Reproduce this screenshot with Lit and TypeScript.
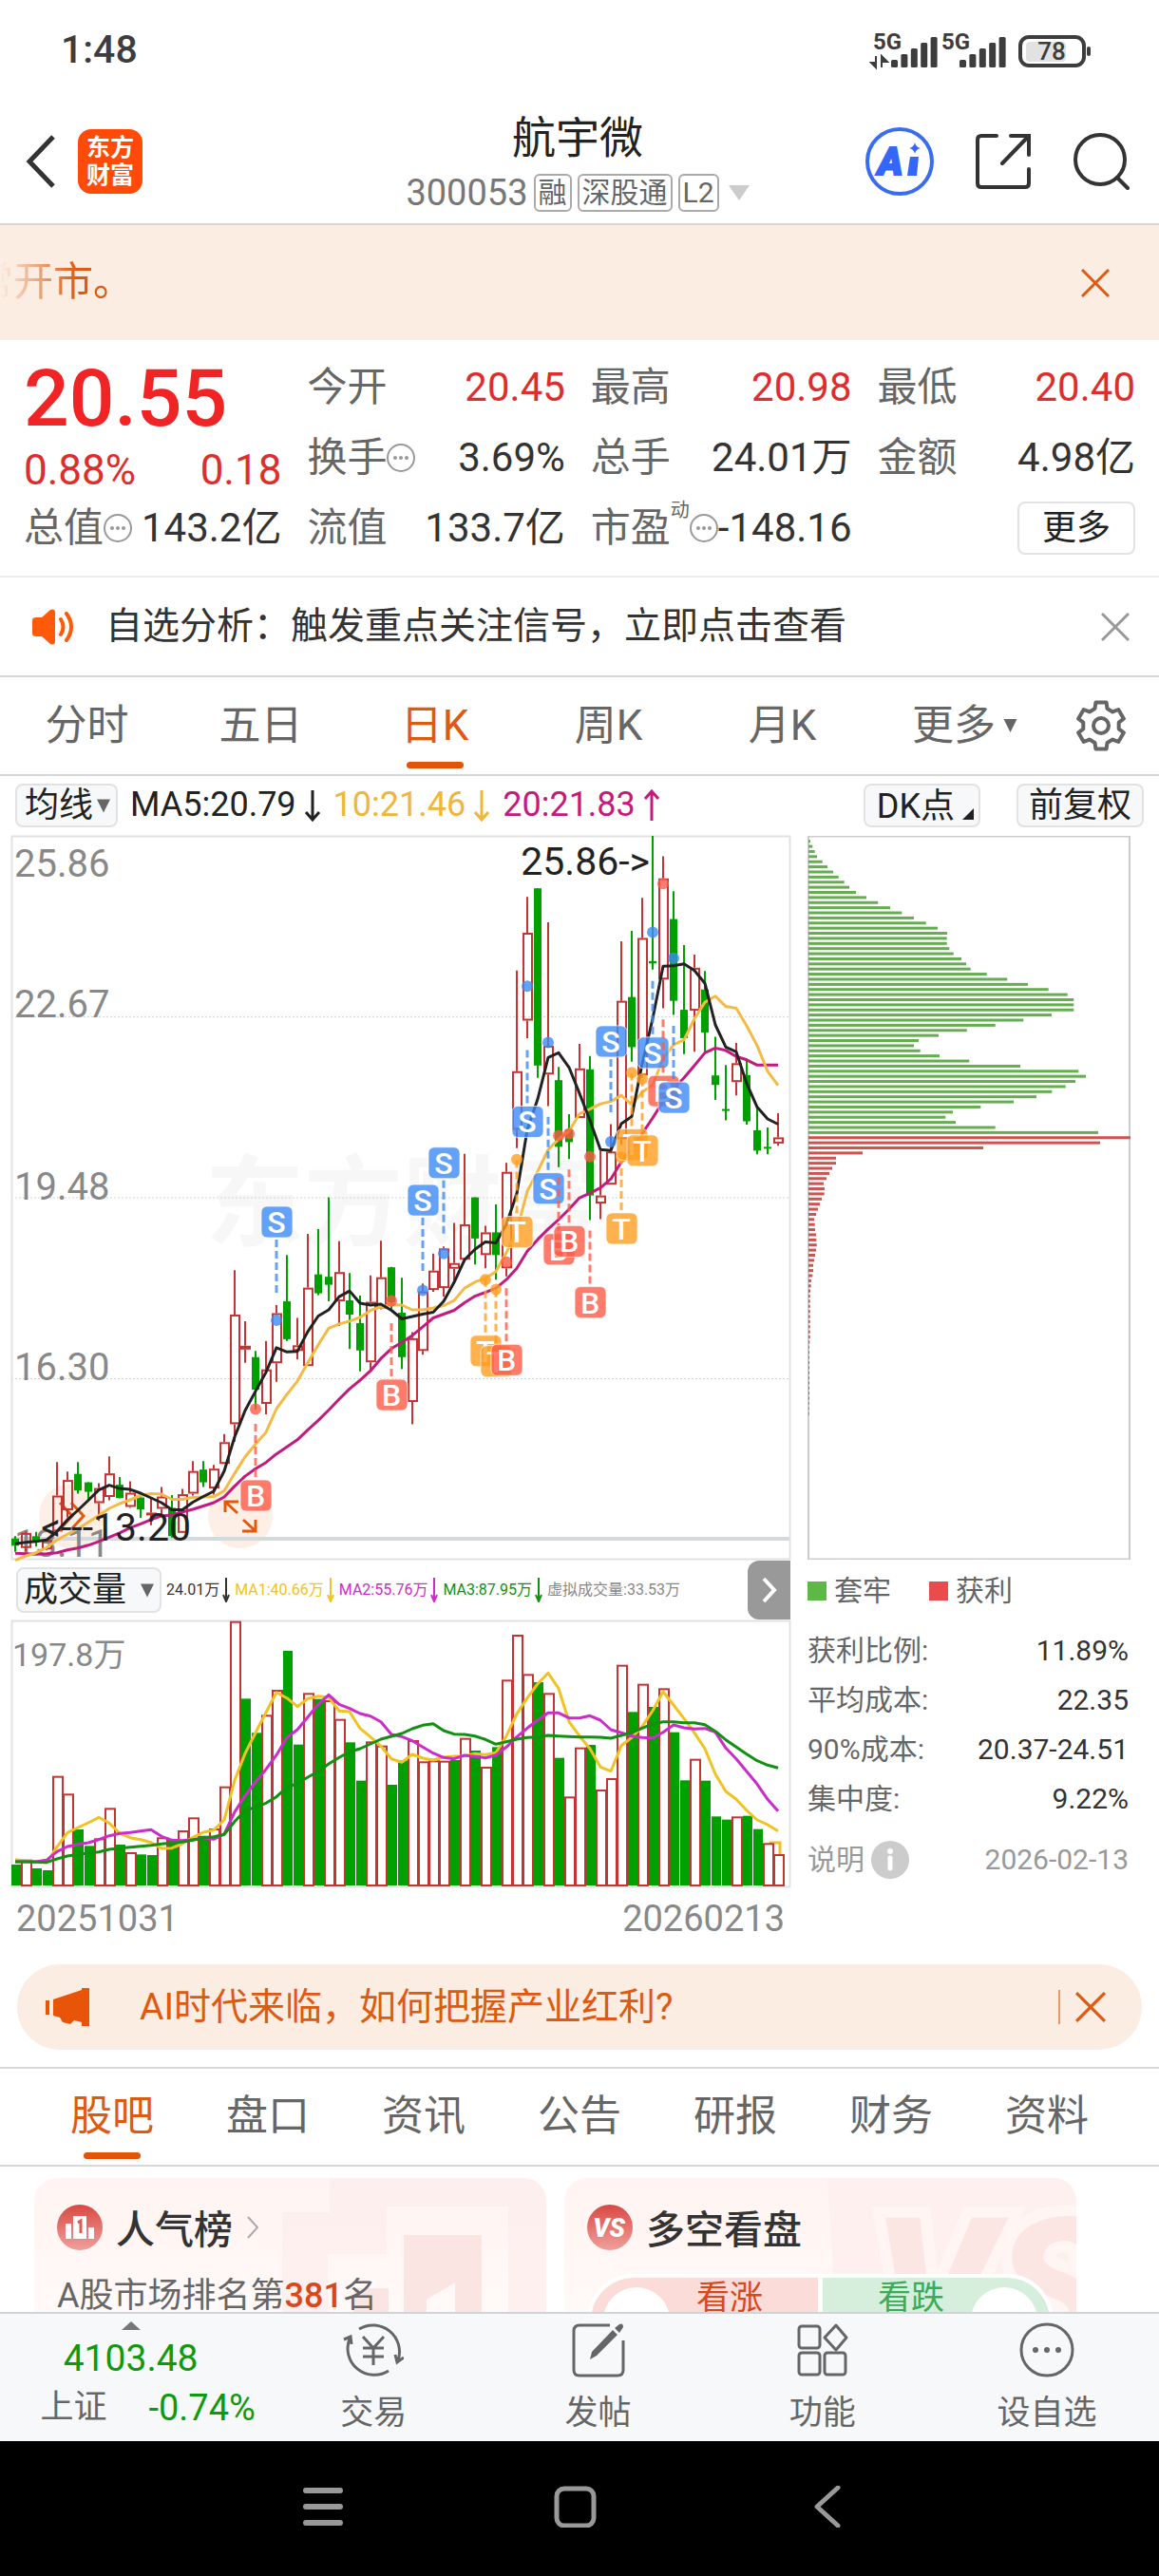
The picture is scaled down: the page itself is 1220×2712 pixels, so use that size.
import { LitElement, html, svg, css } from "lit";
import { customElement } from "lit/decorators.js";
import { classMap } from "lit/directives/class-map.js";

/* ---------- chart data ---------- */

// One candle per trading day: direction, high, body top, body bottom, low.
// Levels run downwards from the top of the plot.
type Candle = [string, number, number, number, number];
const CANDLES: Candle[] = [
  ["g", 1500, 1505, 1520, 1533], ["r", 1490, 1493, 1525, 1532], ["g", 1491, 1500, 1510, 1522], ["r", 1505, 1508, 1528, 1530],
  ["r", 1343, 1414, 1490, 1495], ["r", 1363, 1381, 1445, 1460], ["g", 1343, 1368, 1403, 1410], ["g", 1386, 1386, 1406, 1425],
  ["r", 1388, 1398, 1430, 1467], ["r", 1331, 1367, 1417, 1424], ["g", 1375, 1391, 1419, 1420], ["r", 1384, 1408, 1438, 1440],
  ["g", 1418, 1418, 1443, 1461], ["r", 1420, 1450, 1453, 1477], ["r", 1396, 1416, 1442, 1453], ["g", 1413, 1440, 1500, 1503],
  ["r", 1400, 1411, 1493, 1493], ["r", 1341, 1362, 1410, 1414], ["g", 1341, 1359, 1386, 1396], ["r", 1349, 1357, 1399, 1412],
  ["r", 1284, 1301, 1347, 1347], ["r", 937, 1031, 1263, 1300], ["r", 1045, 1097, 1105, 1133], ["g", 1108, 1121, 1190, 1232],
  ["r", 1087, 1147, 1220, 1242], ["r", 1011, 1028, 1134, 1173], ["g", 905, 1003, 1083, 1087], ["r", 1038, 1096, 1108, 1126],
  ["r", 860, 974, 1140, 1140], ["g", 850, 946, 986, 990], ["g", 783, 951, 968, 1003], ["r", 876, 941, 1003, 1055],
  ["g", 943, 1001, 1031, 1104], ["g", 991, 1049, 1107, 1151], ["r", 948, 1004, 1132, 1150], ["r", 875, 952, 1018, 1020],
  ["g", 930, 931, 1005, 1020], ["g", 953, 1027, 1121, 1146], ["r", 1068, 1081, 1216, 1263], ["r", 965, 982, 1108, 1116],
  ["r", 902, 938, 979, 983], ["r", 887, 891, 975, 993], ["r", 837, 922, 934, 962], ["r", 691, 840, 915, 920],
  ["g", 783, 783, 870, 925], ["r", 843, 857, 905, 933], ["g", 798, 857, 905, 957], ["r", 710, 729, 933, 950],
  ["r", 303, 516, 640, 679], ["r", 147, 223, 409, 446], ["g", 129, 129, 504, 530], ["r", 201, 462, 523, 590],
  ["g", 507, 535, 676, 719], ["g", 607, 640, 666, 702], ["r", 458, 510, 615, 615], ["g", 484, 512, 779, 831],
  ["r", 685, 779, 796, 829], ["r", 628, 686, 756, 756], ["r", 241, 367, 660, 672], ["g", 219, 359, 465, 496],
  ["r", 149, 234, 525, 530], ["g", 18, 283, 288, 301], ["r", 61, 108, 322, 383], ["g", 135, 194, 367, 397],
  ["g", 249, 386, 446, 480], ["r", 269, 297, 388, 475], ["g", 304, 343, 434, 476], ["g", 443, 525, 545, 577],
  ["g", 503, 596, 600, 620], ["r", 456, 499, 539, 567], ["g", 490, 524, 622, 629], ["g", 592, 641, 684, 692],
  ["g", 635, 676, 680, 692], ["r", 605, 656, 669, 674],
];

const MA5 = [1516, 1513, 1511, 1508, 1490, 1465, 1445, 1424, 1402, 1392, 1399, 1401, 1409, 1419, 1429, 1444, 1444, 1428, 1416, 1405, 1362, 1290, 1234, 1193, 1153, 1101, 1110, 1109, 1067, 1034, 1021, 993, 981, 1007, 1011, 1009, 1022, 1040, 1035, 1030, 1026, 1003, 963, 915, 893, 877, 879, 840, 775, 640, 575, 487, 477, 508, 563, 620, 682, 684, 627, 612, 500, 405, 294, 293, 289, 303, 330, 418, 465, 475, 542, 592, 617, 628];
const MA10 = [1551, 1542, 1535, 1524, 1508, 1496, 1484, 1470, 1456, 1441, 1431, 1423, 1414, 1410, 1411, 1422, 1422, 1418, 1417, 1416, 1404, 1367, 1332, 1305, 1280, 1230, 1200, 1172, 1133, 1095, 1060, 1051, 1045, 1037, 1022, 1015, 1010, 1011, 1021, 1021, 1017, 1012, 1001, 975, 962, 954, 940, 900, 855, 770, 728, 682, 660, 643, 606, 596, 585, 580, 567, 587, 560, 545, 490, 460, 450, 405, 370, 357, 379, 383, 420, 462, 516, 546];
const MA20 = [1536, 1537, 1538, 1537, 1535, 1529, 1525, 1519, 1511, 1502, 1493, 1482, 1474, 1465, 1457, 1455, 1449, 1443, 1436, 1429, 1417, 1394, 1373, 1357, 1344, 1326, 1311, 1296, 1275, 1255, 1233, 1210, 1188, 1170, 1150, 1124, 1103, 1090, 1075, 1057, 1038, 1030, 1022, 1006, 992, 984, 975, 957, 933, 897, 872, 850, 830, 808, 784, 774, 763, 744, 708, 680, 648, 615, 580, 553, 530, 504, 477, 467, 472, 485, 492, 503, 503, 503];

// Trade marks: letter, day, dot level, badge level.
const MARKS: [string, number, number, number][] = [
  ["S", 25, 1043, 834], ["S", 39, 980, 788], ["S", 41, 902, 709], ["S", 49, 336, 622], ["S", 51, 455, 763],
  ["S", 57, 665, 452], ["S", 61, 222, 476], ["T", 58, 698, 848], ["T", 59, 519, 670], ["T", 60, 532, 683],
  ["T", 48, 703, 855], ["T", 45, 957, 1107], ["T", 46, 978, 1129], ["B", 47, 920, 1126], ["B", 52, 652, 892],
  ["B", 53, 648, 875], ["B", 55, 697, 1004], ["B", 62, 119, 557], ["S", 63, 277, 571], ["B", 23, 1231, 1413],
  ["B", 36, 1002, 1200],
];
const MARK_FILL: Record<string, string> = { S: "#3d8bf8", B: "#ff5a46", T: "#ff9d20" };

// Volume bar tops, with their direction.
const VOLUMES = "g966 r950 g978 g984 r686 r742 g855 g907 r883 r787 g903 r927 g934 g936 r880 g885 r858 r817 g875 r852 r719 r197 g442 g550 r493 r414 g291 g587 r424 g443 r447 r506 g580 g701 r577 r590 g714 g637 r573 r640 r637 r638 g636 r566 g606 r657 g595 r382 r240 r364 g390 r424 g629 r751 r596 g588 r729 r693 r335 g484 r395 g468 r409 g548 g700 r632 g701 g814 g824 r814 g812 g854 r898 r933".split(" ");
const VMA1 = [950, 955, 957, 960, 910, 865, 849, 834, 817, 835, 867, 881, 887, 896, 915, 914, 900, 880, 864, 857, 825, 700, 615, 550, 485, 422, 440, 467, 442, 434, 438, 481, 483, 536, 563, 592, 632, 643, 618, 630, 636, 627, 624, 623, 616, 619, 613, 560, 490, 440, 395, 361, 410, 515, 560, 600, 658, 671, 590, 565, 530, 480, 420, 462, 505, 550, 600, 680, 735, 760, 795, 825, 840, 860];
const VMA2 = [957, 957, 957, 952, 925, 909, 902, 897, 887, 875, 868, 865, 860, 856, 877, 889, 890, 887, 882, 886, 870, 800, 748, 705, 665, 620, 565, 540, 500, 460, 430, 460, 473, 489, 497, 515, 555, 562, 575, 595, 614, 628, 632, 621, 625, 629, 620, 595, 563, 535, 510, 487, 487, 503, 503, 496, 510, 540, 550, 560, 565, 566, 548, 525, 534, 538, 536, 548, 598, 632, 672, 712, 760, 797];
const VMA3 = [957, 957, 958, 959, 948, 939, 934, 930, 926, 918, 914, 911, 908, 905, 901, 898, 895, 889, 882, 878, 871, 830, 795, 785, 772, 752, 722, 710, 690, 672, 648, 628, 610, 600, 585, 570, 561, 552, 537, 526, 521, 543, 554, 555, 560, 571, 586, 578, 570, 565, 563, 558, 560, 562, 563, 563, 564, 567, 558, 549, 535, 522, 515, 515, 518, 518, 524, 545, 572, 595, 617, 638, 652, 661];

// Lengths of the cost distribution bars, highest price first.
const TRAPPED = [6, 13, 20, 27, 44, 60, 78, 95, 113, 129, 150, 183, 220, 258, 295, 333, 371, 408, 438, 437, 437, 445, 458, 483, 498, 512, 563, 628, 693, 758, 818, 838, 838, 838, 768, 679, 590, 500, 411, 348, 333, 353, 414, 508, 669, 853, 876, 843, 812, 769, 720, 648, 544, 456, 433, 465, 590, 915];
const PROFIT = [1018, 921, 552, 171, 87, 87, 75, 66, 57, 48, 51, 50, 42, 36, 30, 24, 18, 20, 21, 24, 25, 26, 24, 21, 18, 15, 15, 13, 9, 8, 6, 5, 5, 5, 5, 5, 5, 5, 5, 5, 4, 3, 3, 3, 3, 3, 3, 3, 3, 3, 3, 3, 2, 2, 2];

const PITCH = 11;
const dayX = (i: number) => 4 + i * PITCH;
const priceY = (v: number) => (v - 18) / 2.01;
const volY = (v: number) => (v - 195) / 3;
const points = (values: number[], y: (v: number) => number) =>
  values.map((v, i) => `${dayX(i)},${y(v).toFixed(1)}`).join(" ");

/* ---------- shared icons ---------- */

const closeIcon = (cls: string) => html`
  <svg class=${cls} viewBox="0 0 30 30" fill="none" stroke="currentColor" stroke-width="3"><path d="M1 1 29 29M29 1 1 29" /></svg>`;

const moreDots = html`
  <svg class="hint" viewBox="0 0 30 30" fill="none" stroke="#999" stroke-width="2">
    <circle cx="15" cy="15" r="14" /><g fill="#999" stroke="none"><circle cx="9" cy="15" r="2" /><circle cx="15" cy="15" r="2" /><circle cx="21" cy="15" r="2" /></g>
  </svg>`;

const gearPath = (() => {
  const out: string[] = [];
  for (let k = 0; k < 6; k++) {
    const mid = -90 + k * 60;
    for (const [r, a] of [[19, -20], [25, -13], [25, 13], [19, 20]]) {
      const t = ((mid + a) * Math.PI) / 180;
      out.push(`${(27 + r * Math.cos(t)).toFixed(1)} ${(27 + r * Math.sin(t)).toFixed(1)}`);
    }
  }
  return "M" + out.join("L") + "Z";
})();

const base = css`
  * { box-sizing: border-box; }
  button, select, a { font: inherit; color: inherit; background: none; border: 0; margin: 0; padding: 0; text-decoration: none; }
  button, select { cursor: pointer; }
  select { appearance: none; outline: none; }
  svg { display: block; flex: none; }
`;

/* ---------- price chart ---------- */

@customElement("price-chart")
export class PriceChart extends LitElement {
  static styles = [base, css`
    :host { display: block; position: relative; }
    svg.plot { position: relative; z-index: 1; pointer-events: none; width: 100%; height: auto; overflow: visible; }
    text { font-family: Roboto, "Noto Sans CJK SC", sans-serif; }
    .round { position: absolute; width: 68px; height: 68px; border-radius: 50%; background: #fdefe6; display: grid; place-items: center; }
    .round svg { width: 38px; height: 38px; }
    .forward { left: 3.5%; bottom: 12px; }
    .expand { left: 25.3%; bottom: 12px; }
  `];

  private candle([dir, high, top, bottom, low]: Candle, i: number) {
    const x = dayX(i);
    const t = priceY(top);
    const h = Math.max(priceY(bottom) - t, 2);
    if (dir === "g") {
      return svg`<path d="M${x} ${priceY(high)}V${priceY(low)}" stroke="#00a000" stroke-width="2"/><rect x=${x - 4} y=${t} width="8" height=${h} fill="#00a000"/>`;
    }
    return svg`<path d="M${x} ${priceY(high)}V${t}M${x} ${t + h}V${Math.max(priceY(low), t + h)}" stroke="#c43432" stroke-width="2"/><rect x=${x - 4} y=${t + 1} width="9" height=${Math.max(h - 2, 1)} stroke="#c43432" stroke-width="2"/>`;
  }

  private mark([letter, day, dot, badge]: [string, number, number, number]) {
    const x = dayX(day);
    const fill = MARK_FILL[letter];
    const b = priceY(badge);
    const side = badge < dot ? 1 : -1;
    return svg`
      <path d="M${x} ${b + side * 19}V${b + side * 76}" stroke=${fill} stroke-opacity=".8" stroke-width="3" stroke-dasharray="8 4"/>
      <circle cx=${x} cy=${priceY(dot)} r="6" fill=${fill} fill-opacity=".8"/>
      <rect x=${x - 16} y=${b - 16} width="33" height="33" rx="6" fill=${fill} fill-opacity=".8" stroke="#fff" stroke-opacity=".7" stroke-width="1"/>
      <text x=${x} y=${b + 12} font-size="32" font-weight="500" fill="#fff" text-anchor="middle">${letter}</text>`;
  }

  render() {
    return html`
      <button class="round forward" aria-label="前进">
        <svg viewBox="0 0 38 38" fill="none" stroke="#e2590b" stroke-width="3"><path d="M7 5 20 19 7 33M19 5 32 19 19 33" /></svg>
      </button>
      <button class="round expand" aria-label="展开">
        <svg viewBox="0 0 38 38" fill="none" stroke="#e2590b" stroke-width="3"><path d="M3 15V4H17M4 5 16 16M35 23V35H21M34 34 22 23" /></svg>
      </button>
      <svg class="plot" viewBox="0 0 820 762" fill="none">
        <text x="204" y="424" font-size="104" font-weight="700" fill="#f7f7f7">东方财富</text>
        <path d="M0 190.5H820M0 381H820M0 571.500H820" stroke="#d4d4d4" stroke-width="1" stroke-dasharray="2 2" />
        <path d="M0 740H820" stroke="#d3dadd" stroke-width="4" />
        <rect x=".5" y=".5" width="819" height="761" stroke="#e2e2e2" stroke-width="2" />
        <g fill="#888" font-size="40">
          <text x="3" y="43">25.86</text><text x="3" y="191">22.67</text><text x="3" y="383">19.48</text><text x="3" y="573">16.30</text><text x="3" y="759">13.11</text>
        </g>
        ${CANDLES.map((c, i) => this.candle(c, i))}
        <g stroke-width="3" stroke-linejoin="round">
          <polyline points=${points(MA20, priceY)} stroke="#c41a7f" />
          <polyline points=${points(MA10, priceY)} stroke="#f3bb45" />
          <polyline points=${points(MA5, priceY)} stroke="#222" />
        </g>
        ${MARKS.map((m) => this.mark(m))}
        <g fill="#222" font-size="41">
          <text x="672" y="41" text-anchor="end">25.86-&gt;</text>
          <text x="189" y="742" text-anchor="end">&lt;---13.20</text>
        </g>
      </svg>`;
  }
}

/* ---------- volume chart ---------- */

@customElement("volume-chart")
export class VolumeChart extends LitElement {
  static styles = [base, css`
    :host { display: block; }
    svg.plot { width: 100%; height: auto; overflow: visible; }
    text { font-family: Roboto, "Noto Sans CJK SC", sans-serif; }
  `];

  render() {
    return html`
      <svg class="plot" viewBox="0 0 820 281" fill="none">
        <rect x=".5" y=".5" width="819" height="280" stroke="#e2e2e2" stroke-width="2" />
        <text x="1" y="48" font-size="34" fill="#888">197.8万</text>
        <path d="M799 280V234H809V280" stroke="#f0c020" stroke-width="3" />
        ${VOLUMES.map((v, i) => {
          const y = volY(Number(v.slice(1)));
          const x = dayX(i);
          return v[0] === "g"
            ? svg`<rect x=${x - 4} y=${y} width="10" height=${279 - y} fill="#00a000"/>`
            : svg`<rect x=${x - 4} y=${y + 1} width="10" height=${278 - y} fill="#fff" stroke="#c43432" stroke-width="2"/>`;
        })}
        <g stroke-width="3" stroke-linejoin="round">
          <polyline points=${points(VMA1, volY)} stroke="#f0c322" />
          <polyline points=${points(VMA2, volY)} stroke="#cc2ccc" />
          <polyline points=${points(VMA3, volY)} stroke="#119011" />
        </g>
      </svg>`;
  }
}

/* ---------- cost distribution ---------- */

@customElement("cost-chart")
export class CostChart extends LitElement {
  static styles = [base, css`
    :host { display: block; }
    svg.plot { width: 100%; height: auto; }
  `];

  render() {
    const bar = (len: number, i: number, fill: string) =>
      svg`<rect x="1" y=${(4.2 + i * 5.38).toFixed(2)} width=${(len / 3).toFixed(1)} height="3" fill=${fill} />`;
    return html`
      <svg class="plot" viewBox="0 0 340 762">
        <rect x="1" y=".5" width="338" height="761" fill="none" stroke="#ccc" stroke-width="2" />
        ${TRAPPED.map((l, i) => bar(l, i, "#64ae50"))}
        ${PROFIT.map((l, i) => bar(l, i + TRAPPED.length, "#ce5450"))}
      </svg>`;
  }
}

/* ---------- page ---------- */

@customElement("app-root")
export class AppRoot extends LitElement {
  static styles = [base, css`
    :host {
      display: flex; flex-direction: column; height: 100vh; overflow: hidden;
      background: #fff; color: #333;
      font-family: Roboto, "Noto Sans CJK SC", sans-serif; font-size: 42px; line-height: 1.2;
    }
    .status { display: flex; justify-content: space-between; align-items: center; height: 106px; padding: 0 76px 0 64px; font-size: 41px; color: #3d3d3d; font-weight: 500; flex: none; }
    .status svg { width: 230px; height: 44px; overflow: visible; }

    header { display: grid; grid-template-columns: 1fr auto 1fr; align-items: center; height: 131px; padding: 0 31px 2px 27px; border-bottom: 2px solid #d6d6d6; flex: none; }
    .left, .right { display: flex; align-items: center; }
    .left { gap: 24px; }
    .right { justify-content: flex-end; gap: 44px; }
    .back { width: 31px; height: 56px; }
    .logo { display: grid; place-content: center; width: 68px; height: 68px; border-radius: 14px; background: #ff4a08; color: #fff; font-size: 25px; line-height: 29px; font-weight: 700; text-align: center; }
    .title { display: flex; flex-direction: column; align-items: center; gap: 8px; padding-top: 2px; }
    h1 { margin: 0; font-size: 46px; line-height: 56px; font-weight: 400; color: #222; }
    .code { display: flex; align-items: center; gap: 6px; font-size: 38px; line-height: 44px; color: #777; }
    .tag { border: 2px solid #aaa; border-radius: 6px; font-size: 30px; line-height: 36px; padding: 0 3px; color: #666; }
    .code svg { width: 22px; height: 16px; margin-left: 4px; }
    .right .ai { width: 72px; height: 72px; }
    .share { width: 58px; height: 58px; }
    .search { width: 60px; height: 60px; }

    .banner { display: flex; justify-content: space-between; align-items: center; height: 121px; padding-right: 52px; background: #fcede3; color: #dd5a10; flex: none; overflow: hidden; }
    .banner p { margin: 0 0 0 -28px; white-space: nowrap; -webkit-mask-image: linear-gradient(90deg, transparent 28px, #000 110px); mask-image: linear-gradient(90deg, transparent 28px, #000 110px); }
    .close { width: 30px; height: 30px; }

    .quote { display: grid; grid-template-columns: repeat(4, 1fr); column-gap: 27px; grid-template-rows: repeat(3, 74px); padding: 13px 25px 13px; border-bottom: 2px solid #ececec; flex: none; }
    .now { grid-row: span 2; display: flex; flex-direction: column; color: #dd2e2e; }
    .now strong { font-size: 84px; line-height: 98px; font-weight: 500; color: #f02424; }
    .now div { display: flex; justify-content: space-between; font-size: 44px; line-height: 52px; }
    .cell { display: flex; align-items: center; white-space: nowrap; }
    .cell span { color: #666; }
    .cell b { margin-left: auto; font-weight: 400; }
    .cell sup { font-size: 20px; line-height: 20px; align-self: flex-start; margin-top: 8px; color: #666; }
    .hint { width: 30px; height: 30px; }
    .up { color: #dd2e2e; }
    .pill { border: 2px solid #e2e2e2; border-radius: 8px; background: #f7f8fa; color: #222; }
    .cell .pill { margin-left: auto; background: #fff; width: 124px; height: 56px; font-size: 36px; line-height: 48px; }

    .notice { display: flex; align-items: center; height: 105px; padding: 0 31px 0 33px; border-bottom: 2px solid #d8d8d8; font-size: 39px; flex: none; }
    .notice .horn { width: 46px; height: 38px; margin-right: 32px; }
    .notice button { margin-left: auto; color: #999; }

    .tabs { display: grid; grid-template-columns: repeat(6, 1fr) 122px; align-items: center; height: 104px; border-bottom: 2px solid #d8d8d8; font-size: 44px; color: #666; flex: none; }
    .tabs a { display: flex; justify-content: center; align-items: center; gap: 8px; height: 100%; position: relative; white-space: nowrap; }
    .tabs .on { color: #dd5a10; }
    .tabs .on::after { content: ""; position: absolute; bottom: 6px; left: calc(50% - 30px); width: 60px; height: 7px; border-radius: 4px; background: #e25408; }
    .tabs .menu { padding-left: 18px; }
    .tabs svg.tri { width: 15px; height: 14px; }
    .tabs button { display: grid; place-items: center; }
    .tabs .gear { width: 54px; height: 54px; }
    .tabs.info { grid-template-columns: repeat(7, 1fr); padding: 0 36px; border-top: 2px solid #d8d8d8; height: 105px; }

    .averages { display: flex; align-items: center; height: 62px; padding: 0 16px; font-size: 36px; white-space: nowrap; color: #222; flex: none; }
    .averages > span { display: flex; align-items: center; gap: 8px; margin-left: 13px; }
    .arrow { width: 18px; height: 34px; }
    .drop { position: relative; display: flex; align-items: center; height: 46px; padding: 0 6px 0 8px; gap: 3px; font-size: 36px; line-height: 42px; }
    .drop svg { width: 14px; height: 15px; pointer-events: none; }
    .averages button.pill { height: 46px; line-height: 40px; padding: 0 11px; }
    .averages .dk { margin-left: auto; margin-right: 38px; display: flex; align-items: flex-end; gap: 8px; }
    .averages .pill.dk { padding: 0 5px 0 12px; }
    .averages .dk svg { width: 12px; height: 12px; margin-bottom: 6px; }
    .yellow { color: #efb63e; }
    .pink { color: #c41a7f; }

    .charts { display: grid; grid-template-columns: 820fr 340fr; column-gap: 18px; padding: 1px 30px 0 12px; flex: none; }
    .volbar { display: flex; align-items: center; height: 64px; padding-left: 5px; font-size: 16px; gap: 5px; white-space: nowrap; }
    .volbar .drop { height: 48px; padding: 0 6px 0 6px; gap: 14px; }
    .volbar span { display: flex; align-items: center; gap: 3px; }
    .volbar span svg { width: 8px; height: 26px; }
    .volbar .next { margin-left: auto; display: grid; place-items: center; width: 45px; height: 62px; background: #999; border-radius: 12px 0 0 12px; }
    .next svg { width: 16px; height: 28px; }
    .v1 { color: #f0c322; } .v2 { color: #cc2ccc; } .v3 { color: #119011; } .v4 { color: #888; }
    .dates { display: flex; justify-content: space-between; padding: 10px 6px 0 5px; font-size: 38px; line-height: 46px; color: #888; }

    .legend { display: flex; align-items: center; gap: 8px; height: 66px; font-size: 30px; color: #666; }
    .legend i { width: 20px; height: 20px; background: #5cb946; }
    .legend i.red { background: #e84c4c; margin-left: 32px; }
    dl { margin: 4px 0 0; font-size: 30px; }
    dl div { display: flex; justify-content: space-between; align-items: center; height: 52px; padding-right: 2px; white-space: nowrap; }
    dt { color: #666; } dd { margin: 0; }
    dl .note { height: 76px; color: #999; }
    .note button { display: flex; align-items: center; gap: 7px; color: #999; }
    .note svg { width: 40px; height: 40px; }

    .promo { display: flex; align-items: center; margin: 25px 18px 18px; height: 90px; padding: 0 38px 0 30px; border-radius: 45px; background: #fcede3; color: #dd5a10; font-size: 39px; flex: none; }
    .promo .mega { width: 46px; height: 40px; margin-right: 53px; }
    .promo .bar { width: 2px; height: 36px; background: #e89868; margin: 0 16px 0 auto; }
    .promo .close { width: 32px; height: 32px; }

    .feed { flex: 1 1 0; min-height: 0; overflow: hidden; display: grid; grid-template-columns: 1fr 1fr; grid-auto-rows: 260px; column-gap: 19px; padding: 12px 87px 0 36px; }
    .card { position: relative; border-radius: 24px; overflow: hidden; background: linear-gradient(#fff4f2, #fffaf8 60%); padding: 28px 24px; }
    .card .ghost { position: absolute; right: 0; top: 0; height: 260px; width: 290px; }
    .card h2 { position: relative; display: flex; align-items: center; gap: 14px; margin: 0; height: 48px; font-size: 41px; font-weight: 500; font-family: "Noto Sans CJK SC", sans-serif; }
    .card h2 svg { width: 48px; height: 48px; }
    .card h2 svg.go { width: 14px; height: 24px; }
    .rank { position: relative; margin: 27px 0 0; font-size: 36px; line-height: 42px; color: #666; }
    .rank b { color: #d8481c; font-weight: 500; }
    .vote { position: relative; display: grid; grid-template-columns: 1fr 1fr; column-gap: 5px; margin: 29px 4px 0; height: 90px; border-radius: 45px; outline: 4px solid #fff; overflow: hidden; font-size: 35px; color: #d8481c; background: #fff; }
    .vote button { background: #fcdcd8; display: flex; align-items: center; gap: 28px; padding: 0 13px; line-height: 44px; }
    .vote button:last-child { background: #d6eedc; color: #3cab58; justify-content: flex-end; }
    .knob { width: 70px; height: 70px; border-radius: 50%; background: #fff; }
    .vote em { font-style: normal; align-self: flex-start; }

    footer { display: grid; grid-template-columns: 275fr repeat(4, 236fr); height: 136px; border-top: 2px solid #d0d3d8; background: #f7f8fa; color: #666; font-size: 35px; flex: none; }
    .index { display: flex; flex-direction: column; align-items: center; padding-top: 8px; }
    .index .tri { width: 20px; height: 9px; }
    .index b { font-weight: 400; font-size: 39px; line-height: 60px; color: #0f990f; }
    .index span { display: flex; gap: 44px; padding-left: 36px; font-size: 35px; line-height: 44px; }
    .index i { font-style: normal; font-size: 38px; color: #0f990f; }
    .tool { display: flex; flex-direction: column; align-items: center; gap: 13px; padding-top: 8px; line-height: 48px; }
    .tool svg { width: 64px; height: 60px; }
    .system { display: flex; justify-content: center; align-items: center; gap: 200px; height: 142px; padding: 0 9px 4px 0; background: #000; flex: none; }
    .system svg { width: 65px; height: 44px; }
  `];

  private down = html`<svg class="arrow" viewBox="0 0 18 34" fill="none" stroke="currentColor" stroke-width="3"><path d="M9 1V32M2 24 9 32 16 24" /></svg>`;
  private rise = html`<svg class="arrow" viewBox="0 0 18 34" fill="none" stroke="currentColor" stroke-width="3"><path d="M9 33V2M2 10 9 2 16 10" /></svg>`;
  private thin = html`<svg viewBox="0 0 8 26" fill="none" stroke="currentColor" stroke-width="2"><path d="M4 0V25M1 18 4 25 7 18" /></svg>`;
  private tri = html`<svg class="tri" viewBox="0 0 14 14" fill="#666"><path d="M0 0H14L7 14Z" /></svg>`;

  private cell(label: string, value: string, up = false, hint = false, sup = "") {
    return html`<div class="cell"><span>${label}</span>${sup ? html`<sup>${sup}</sup>` : ""}${hint ? moreDots : ""}<b class=${classMap({ up })}>${value}</b></div>`;
  }

  private statusIcons() {
    const bars = (x: number) => [8, 14, 20, 26, 32].map((h, i) =>
      svg`<rect x=${x + i * 10.4} y=${40 - h} width="7" height=${h} rx="1.500" />`);
    return html`
      <svg viewBox="0 0 230 44" fill="#3d3d3d">
        <text x="5" y="21" font-size="24" font-weight="700">5G</text>
        <text x="77" y="21" font-size="24" font-weight="700">5G</text>
        <path d="M8 28V40L3 35H8M14 40V28L20 34H14" stroke="#3d3d3d" stroke-width="2" />
        ${bars(24)}${bars(96)}
        <rect x="160" y="8" width="67" height="30" rx="9" fill="none" stroke="#3d3d3d" stroke-width="4" />
        <rect x="166" y="13" width="42" height="21" rx="4" fill="#e2e2e2" />
        <rect x="230" y="18" width="4" height="10" rx="2" />
        <text x="193" y="32" font-size="26" font-weight="500" text-anchor="middle">78</text>
      </svg>`;
  }

  render() {
    return html`
      <div class="status"><span>1:48</span>${this.statusIcons()}</div>

      <header>
        <div class="left">
          <button aria-label="返回"><svg class="back" viewBox="0 0 31 56" fill="none" stroke="#333" stroke-width="5"><path d="M29 2 4 28 29 54" /></svg></button>
          <a class="logo" href="#">东方<br />财富</a>
        </div>
        <div class="title">
          <h1>航宇微</h1>
          <div class="code">300053<span class="tag">融</span><span class="tag">深股通</span><span class="tag">L2</span>
            <svg viewBox="0 0 22 16" fill="#ccc"><path d="M0 0H22L11 16Z" /></svg></div>
        </div>
        <div class="right">
          <button aria-label="AI">
            <svg class="ai" viewBox="0 0 72 72"><circle cx="36" cy="36" r="34" fill="none" stroke="#3a6cf0" stroke-width="4" />
              <text x="13" y="50" font-size="40" font-weight="900" font-style="italic" fill="#3566fa" stroke="#3566fa" stroke-width="2">A</text>
              <path d="M47 31H56L54 51H44Z" fill="#3566fa" /><path d="M52 16Q53 21 58 22Q53 23 52 28Q51 23 46 22Q51 21 52 16Z" fill="#3566fa" /></svg>
          </button>
          <button aria-label="分享">
            <svg class="share" viewBox="0 0 58 58" fill="none" stroke="#333" stroke-width="4" stroke-linecap="round"><path d="M22 2H6Q2 2 2 6V52Q2 56 6 56H52Q56 56 56 52V37M37 2H56V22M56 2 28 31" /></svg>
          </button>
          <button aria-label="搜索">
            <svg class="search" viewBox="0 0 60 60" fill="none" stroke="#333" stroke-width="4" stroke-linecap="round"><circle cx="29" cy="28" r="26" /><path d="M47 47 58 58" /></svg>
          </button>
        </div>
      </header>

      <div class="banner"><p>常开市。</p><button aria-label="关闭公告">${closeIcon("close")}</button></div>

      <section class="quote">
        <div class="now"><strong>20.55</strong><div><span>0.88%</span><span>0.18</span></div></div>
        ${this.cell("今开", "20.45", true)}${this.cell("最高", "20.98", true)}${this.cell("最低", "20.40", true)}
        ${this.cell("换手", "3.69%", false, true)}${this.cell("总手", "24.01万")}${this.cell("金额", "4.98亿")}
        ${this.cell("总值", "143.2亿", false, true)}${this.cell("流值", "133.7亿")}${this.cell("市盈", "-148.16", false, true, "动")}
        <div class="cell"><button class="pill">更多</button></div>
      </section>

      <div class="notice">
        <svg class="horn" viewBox="0 0 46 38"><path d="M1 12Q1 9 5 9H11L20 1Q25-1 25 4V34Q25 39 20 37L11 29H5Q1 29 1 26Z" fill="#ff5a0a" /><path d="M31 11Q36 19 31 27M37 5Q47 19 37 33" fill="none" stroke="#ff5a0a" stroke-width="4" stroke-linecap="round" /></svg>
        <span>自选分析：触发重点关注信号，立即点击查看</span>
        <button aria-label="关闭提示">${closeIcon("close")}</button>
      </div>

      <nav class="tabs">
        ${["分时", "五日", "日K", "周K", "月K"].map((t) => html`<a href="#" class=${classMap({ on: t === "日K" })}>${t}</a>`)}
        <a class="menu" href="#">更多${this.tri}</a>
        <button aria-label="设置"><svg class="gear" viewBox="0 0 54 54" fill="none" stroke="#666" stroke-width="4" stroke-linejoin="round"><path d=${gearPath} /><circle cx="27" cy="27" r="8" /></svg></button>
      </nav>

      <div class="averages">
        <label class="pill drop"><select aria-label="指标"><option>均线</option></select>${this.tri}</label>
        <span>MA5:20.79${this.down}</span><span class="yellow">10:21.46${this.down}</span><span class="pink">20:21.83${this.rise}</span>
        <button class="pill dk">DK点<svg viewBox="0 0 12 12" fill="#222"><path d="M12 0V12H0Z" /></svg></button>
        <button class="pill">前复权</button>
      </div>

      <section class="charts">
        <div>
          <price-chart></price-chart>
          <div class="volbar">
            <label class="pill drop"><select aria-label="副图指标"><option>成交量</option></select>${this.tri}</label>
            <span>24.01万${this.thin}</span><span class="v1">MA1:40.66万${this.thin}</span><span class="v2">MA2:55.76万${this.thin}</span><span class="v3">MA3:87.95万${this.thin}</span><span class="v4">虚拟成交量:33.53万</span>
            <button class="next" aria-label="下一项"><svg viewBox="0 0 16 28" fill="none" stroke="#fff" stroke-width="4"><path d="M2 2 13 14 2 26" /></svg></button>
          </div>
          <volume-chart></volume-chart>
          <div class="dates"><span>20251031</span><span>20260213</span></div>
        </div>
        <div>
          <cost-chart></cost-chart>
          <div class="legend"><i></i>套牢<i class="red"></i>获利</div>
          <dl>
            <div><dt>获利比例:</dt><dd>11.89%</dd></div>
            <div><dt>平均成本:</dt><dd>22.35</dd></div>
            <div><dt>90%成本:</dt><dd>20.37-24.51</dd></div>
            <div><dt>集中度:</dt><dd>9.22%</dd></div>
            <div class="note"><dt><button>说明<svg viewBox="0 0 40 40"><circle cx="20" cy="20" r="20" fill="#ccc" /><circle cx="20" cy="11" r="3" fill="#fff" /><path d="M20 18V29" stroke="#fff" stroke-width="5" stroke-linecap="round" /></svg></button></dt><dd>2026-02-13</dd></div>
          </dl>
        </div>
      </section>

      <div class="promo">
        <svg class="mega" viewBox="0 0 46 40" fill="#e85408"><path d="M0 13H4V28H0ZM8 12 38 2V0H46V40H38V36L30 34 26 38 18 36 15 31 8 29Z" /></svg>
        <span>AI时代来临，如何把握产业红利?</span><i class="bar"></i>
        <button aria-label="关闭推广">${closeIcon("close")}</button>
      </div>

      <nav class="tabs info">
        ${["股吧", "盘口", "资讯", "公告", "研报", "财务", "资料"].map((t, i) => html`<a href="#" class=${classMap({ on: i === 0 })}>${t}</a>`)}
      </nav>

      <section class="feed">
        <article class="card">
          <svg class="ghost" viewBox="0 0 290 260" fill="#fdeeec"><path d="M62 0H290V260H250V30H122V80H60V260H12V36H62Z" opacity=".8" /><path d="M140 60H222V260H194V110L164 128V152L178 146V260H140ZM88 116H124V260H84ZM242 145H276V260H242Z" fill="#fbe5e3" /></svg>
          <h2><svg viewBox="0 0 48 48"><defs><linearGradient id="red" x2="0" y2="1"><stop stop-color="#d94844" /><stop offset="1" stop-color="#f0a09c" /></linearGradient></defs><circle cx="24" cy="24" r="24" fill="url(#red)" /><path d="M9 20H15V36H9ZM17 12H31V36H17ZM33 24H39V36H33Z" fill="#fff" /><path d="M22 19 25 17V30" fill="none" stroke="#dd5a56" stroke-width="3" /></svg>人气榜
            <svg class="go" viewBox="0 0 14 24" fill="none" stroke="#aaa" stroke-width="2"><path d="M2 1 12 12 2 23" /></svg></h2>
          <p class="rank">A股市场排名第<b>381</b>名</p>
        </article>
        <article class="card">
          <svg class="ghost" viewBox="0 0 290 260"><path d="M28 0H290V260H44Z" fill="#fdf0ee" /><g font-size="200" font-weight="900" font-style="italic" fill="#fce6e4"><text x="76" y="184" stroke="#fff6f4" stroke-width="24" paint-order="stroke">VS</text></g></svg>
          <h2><svg viewBox="0 0 48 48"><defs><linearGradient id="rose" x2="0" y2="1"><stop stop-color="#d94844" /><stop offset="1" stop-color="#f0a09c" /></linearGradient></defs><circle cx="24" cy="24" r="24" fill="url(#rose)" /><text x="23" y="34" font-size="27" font-weight="900" font-style="italic" font-family="Roboto" fill="#fff" text-anchor="middle">VS</text></svg>多空看盘</h2>
          <div class="vote"><button><i class="knob"></i><em>看涨</em></button><button><em>看跌</em><i class="knob"></i></button></div>
        </article>
      </section>

      <footer>
        <a class="index" href="#"><svg class="tri" viewBox="0 0 20 9" fill="#777"><path d="M10 0 20 9H0Z" /></svg><b>4103.48</b><span>上证<i>-0.74%</i></span></a>
        <button class="tool"><svg viewBox="0 0 64 60" fill="none" stroke="#666" stroke-width="3"><path d="M17 8A28 28 0 0 1 58 41M48 52A28 28 0 0 1 7 18M1 19 8 16 9 24M64 38 57 43 55 35M21 16 32 28 43 16M32 28V46M21 28H43M21 37H43" /></svg>交易</button>
        <button class="tool"><svg viewBox="0 0 64 60" fill="none" stroke="#666" stroke-width="3"><path d="M44 4H12Q6 4 6 10V51Q6 57 12 57H52Q58 57 58 51V20" /><path d="M23 40 25 32 47 9 52 14 30 36ZM49 7 54 3Q58 1 58 6L54 12Z" fill="#666" stroke="none" /></svg>发帖</button>
        <button class="tool"><svg viewBox="0 0 64 60" fill="none" stroke="#666" stroke-width="3"><rect x="7" y="5" width="22" height="23" rx="3" /><rect x="7" y="33" width="22" height="23" rx="3" /><rect x="34" y="33" width="22" height="23" rx="3" /><path d="M46 4 57 17 46 30 34 17Z" stroke-linejoin="round" /></svg>功能</button>
        <button class="tool"><svg viewBox="0 0 64 60" fill="none" stroke="#666" stroke-width="3"><circle cx="32" cy="30" r="27" /><g fill="#666" stroke="none"><circle cx="20" cy="30" r="3" /><circle cx="32" cy="30" r="3" /><circle cx="44" cy="30" r="3" /></g></svg>设自选</button>
      </footer>
      <div class="system">
        <button aria-label="最近任务"><svg viewBox="0 0 65 44" fill="none" stroke="#999" stroke-width="6" stroke-linecap="round"><path d="M14 5H50M14 22H50M14 39H50" /></svg></button>
        <button aria-label="主屏幕"><svg viewBox="0 0 65 44" fill="none" stroke="#999" stroke-width="5"><rect x="13" y="3" width="39" height="39" rx="8" /></svg></button>
        <button aria-label="返回上一页"><svg viewBox="0 0 65 44" fill="none" stroke="#999" stroke-width="5" stroke-linecap="round" stroke-linejoin="round"><path d="M44 2 22 22 44 42" /></svg></button>
      </div>`;
  }
}
